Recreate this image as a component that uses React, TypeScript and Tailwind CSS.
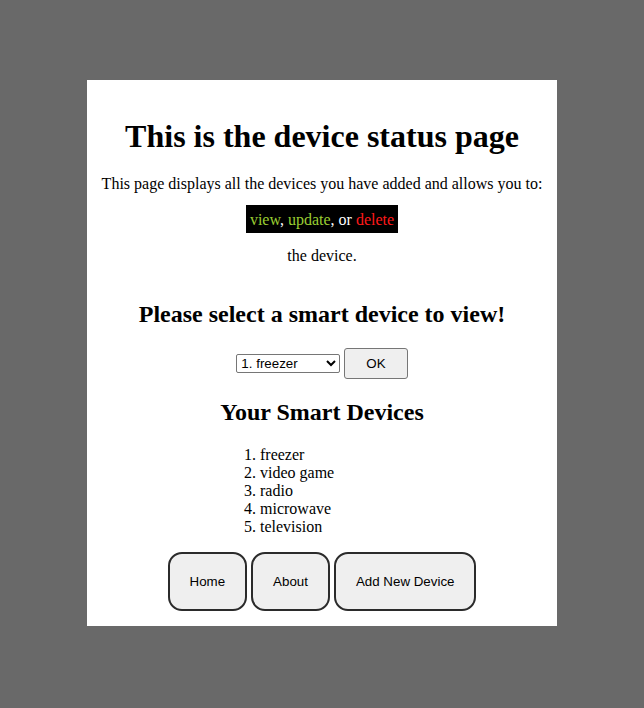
const devices = ['freezer', 'video game', 'radio', 'microwave', 'television'];

const navButtons = ['Home', 'About', 'Add New Device'];

export default function App() {
  return (
    <div className="min-h-screen bg-[#696969] pt-20 pb-20">
      <div className="mx-auto w-[470px] bg-white pt-4 pb-[15px] text-center font-['Liberation_Serif',serif] text-black">
        <h1 className="mt-[22px] text-[32px] font-bold leading-[36px]">This is the device status page</h1>

        <p className="mt-[21px] text-base leading-[18px]">
          This page displays all the devices you have added and allows you to:
        </p>

        <div className="mt-[12px] flex justify-center">
          <span className="bg-black px-1 pt-[5px] pb-1 text-base leading-[19px] text-white">
            <span className="text-[#9acd32]">view</span>, <span className="text-[#9acd32]">update</span>, or{' '}
            <span className="text-[#ff1a1a]">delete</span>
          </span>
        </div>

        <p className="mt-[14px] text-base leading-[18px]">the device.</p>

        <h2 className="mt-[35px] text-2xl font-bold leading-[28px]">Please select a smart device to view!</h2>

        <form className="mt-[20px] flex items-center justify-center gap-1 font-['Liberation_Sans',Arial,sans-serif]">
          <select
            defaultValue="1"
            className="h-[19px] w-[104px] rounded-[2px] border border-[#767676] bg-white text-[13.33px] leading-[15px] text-black"
          >
            {devices.map((d, i) => (
              <option key={d} value={String(i + 1)}>
                {i + 1}. {d}
              </option>
            ))}
          </select>
          <button
            type="button"
            className="rounded-[3px] border border-[#767676] bg-[#efefef] px-[21px] py-[7px] text-[13.33px] leading-[15px] text-black"
          >
            OK
          </button>
        </form>

        <h2 className="mt-[19px] text-2xl font-bold leading-[28px]">Your Smart Devices</h2>

        <ol className="mx-auto mt-[20px] w-[204px] list-decimal pl-10 text-left text-base leading-[18px]">
          {devices.map((d) => (
            <li key={d}>{d}</li>
          ))}
        </ol>

        <div className="mt-4 flex justify-center gap-1 font-['Liberation_Sans',Arial,sans-serif]">
          {navButtons.map((label) => (
            <button
              key={label}
              type="button"
              className="rounded-[14px] border-2 border-[#2b2b2b] bg-[#efefef] p-5 text-[13.33px] leading-[15px] text-black"
            >
              {label}
            </button>
          ))}
        </div>
      </div>
    </div>
  );
}
